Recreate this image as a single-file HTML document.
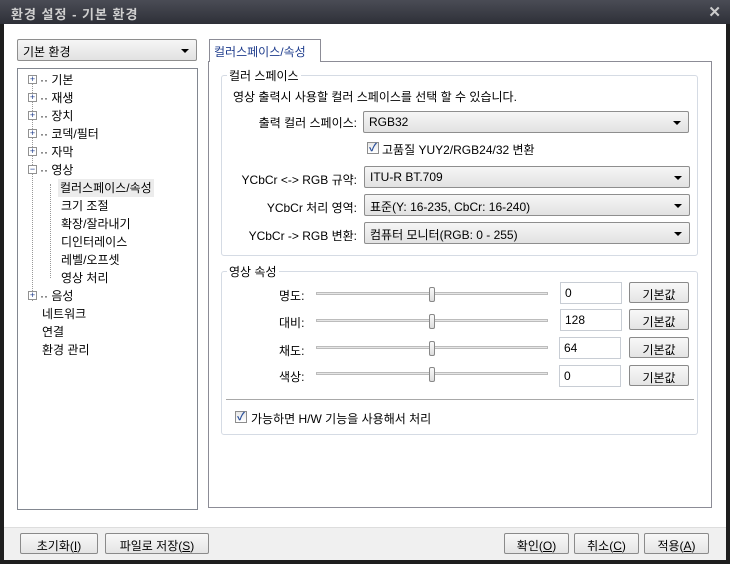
<!DOCTYPE html>
<html><head><meta charset="utf-8"><style>
*{margin:0;padding:0;box-sizing:border-box}
body{width:730px;height:564px;overflow:hidden;background:#1e1e1e;font-family:"Liberation Sans","Noto Sans CJK KR","NanumGothic",sans-serif;font-size:12px;color:#000;position:relative}
.a{position:absolute}
.title{left:0;top:0;width:730px;height:24px;background:linear-gradient(#4a4c55,#2e3038);color:#cfcfcf;font-size:13px;font-weight:bold;padding:4px 0 0 11px;letter-spacing:1px}
.close{right:9px;top:3px;color:#ccc;font-size:15px;font-weight:bold}
.client{left:4px;top:24px;width:722px;height:536px;background:#fff}
.bottom{left:4px;top:527px;width:722px;height:33px;background:#f0f0f0;border-top:1px solid #ddd}
.combo{height:22px;border:1px solid #8e8e8e;border-radius:2px;background:linear-gradient(#f6f6f6,#e2e2e2);padding:3px 5px;font-size:12px}
.combo:after{content:"";position:absolute;right:7px;top:9px;border-left:4px solid transparent;border-right:4px solid transparent;border-top:4px solid #000}
.tree{left:17px;top:68px;width:181px;height:442px;border:1px solid #828790}
.ti{position:absolute;font-size:12px;height:18px}
.pb{position:absolute;width:9px;height:9px;border:1px solid #919191;background:#fff;font-size:9px;line-height:7px;text-align:center;color:#1e3c8c}
.panel{left:208px;top:61px;width:504px;height:447px;border:1px solid #8c8c96}
.tab{left:209px;top:39px;width:112px;height:23px;border:1px solid #8c8c96;border-bottom:none;background:#fff;padding:3px 4px;color:#1e3c8c}
.grp{border:1px solid #d5dbe4;border-radius:3px}
.gl{background:#fff;padding:0 2px}
.lbl{text-align:right;width:150px}
.btn{height:21px;border:1px solid #8a8a8a;border-radius:2px;background:linear-gradient(#f8f8f8,#e4e4e4);text-align:center;font-size:12px;padding-top:3px}
.ed{width:62px;height:22px;border:1px solid #c8cdd4;background:#fff;padding:3px 4px}
.trk{height:3px;border:1px solid #bcbcbc;background:#e6e6e6;width:232px}
.thumb{width:6px;height:15px;border:1px solid #888;border-radius:2px;background:linear-gradient(#fafafa,#ddd)}
.cb{width:12px;height:12px;border:1px solid #8d8d8d;background:linear-gradient(#e8e8e8,#fff);color:#2a4f9a;font-size:11px;line-height:10px;text-align:center;font-weight:bold}
u{text-decoration:underline}
</style></head><body>
<div class="a title">환경 설정 - 기본 환경</div>
<div class="a close">✕</div>
<div class="a client"></div>
<div class="a bottom"></div>

<div class="a combo" style="left:17px;top:39px;width:180px">기본 환경</div>

<div class="a tree">
<div class="a" style="left:14px;top:12px;height:220px;border-left:1px dotted #999"></div>
<div class="a" style="left:32px;top:115px;height:94px;border-left:1px dotted #999"></div>
<div class="pb" style="left:10px;top:6px">+</div><div class="ti" style="left:22px;top:2px">·· 기본</div>
<div class="pb" style="left:10px;top:24px">+</div><div class="ti" style="left:22px;top:20px">·· 재생</div>
<div class="pb" style="left:10px;top:42px">+</div><div class="ti" style="left:22px;top:38px">·· 장치</div>
<div class="pb" style="left:10px;top:60px">+</div><div class="ti" style="left:22px;top:56px">·· 코덱/필터</div>
<div class="pb" style="left:10px;top:78px">+</div><div class="ti" style="left:22px;top:74px">·· 자막</div>
<div class="pb" style="left:10px;top:96px">−</div><div class="ti" style="left:22px;top:92px">·· 영상</div>
<div class="ti" style="left:40px;top:110px;background:#ececec;padding:0 2px">컬러스페이스/속성</div>
<div class="ti" style="left:43px;top:128px">크기 조절</div>
<div class="ti" style="left:43px;top:146px">확장/잘라내기</div>
<div class="ti" style="left:43px;top:164px">디인터레이스</div>
<div class="ti" style="left:43px;top:182px">레벨/오프셋</div>
<div class="ti" style="left:43px;top:200px">영상 처리</div>
<div class="pb" style="left:10px;top:222px">+</div><div class="ti" style="left:22px;top:218px">·· 음성</div>
<div class="ti" style="left:24px;top:236px">네트워크</div>
<div class="ti" style="left:24px;top:254px">연결</div>
<div class="ti" style="left:24px;top:272px">환경 관리</div>
</div>

<div class="a panel"></div>
<div class="a tab">컬러스페이스/속성</div>

<div class="a grp" style="left:221px;top:75px;width:477px;height:181px"></div>
<div class="a gl" style="left:227px;top:67px">컬러 스페이스</div>
<div class="a" style="left:233px;top:88px">영상 출력시 사용할 컬러 스페이스를 선택 할 수 있습니다.</div>
<div class="a lbl" style="left:207px;top:114px">출력 컬러 스페이스:</div>
<div class="a combo" style="left:363px;top:111px;width:326px">RGB32</div>
<div class="a cb" style="left:367px;top:142px">✓</div>
<div class="a" style="left:382px;top:141px">고품질 YUY2/RGB24/32 변환</div>
<div class="a lbl" style="left:207px;top:171px">YCbCr &lt;-&gt; RGB 규약:</div>
<div class="a combo" style="left:364px;top:166px;width:326px">ITU-R BT.709</div>
<div class="a lbl" style="left:207px;top:199px">YCbCr 처리 영역:</div>
<div class="a combo" style="left:364px;top:194px;width:326px">표준(Y: 16-235, CbCr: 16-240)</div>
<div class="a lbl" style="left:207px;top:227px">YCbCr -&gt; RGB 변환:</div>
<div class="a combo" style="left:364px;top:222px;width:326px">컴퓨터 모니터(RGB: 0 - 255)</div>

<div class="a grp" style="left:221px;top:271px;width:477px;height:164px"></div>
<div class="a gl" style="left:227px;top:263px">영상 속성</div>

<div class="a" style="left:279px;top:287px">명도:</div>
<div class="a trk" style="left:316px;top:292px"></div><div class="a thumb" style="left:429px;top:287px"></div>
<div class="a ed" style="left:560px;top:282px">0</div>
<div class="a btn" style="left:629px;top:282px;width:60px">기본값</div>

<div class="a" style="left:279px;top:314px">대비:</div>
<div class="a trk" style="left:316px;top:319px"></div><div class="a thumb" style="left:429px;top:314px"></div>
<div class="a ed" style="left:560px;top:309px">128</div>
<div class="a btn" style="left:629px;top:309px;width:60px">기본값</div>

<div class="a" style="left:279px;top:342px">채도:</div>
<div class="a trk" style="left:316px;top:346px"></div><div class="a thumb" style="left:429px;top:341px"></div>
<div class="a ed" style="left:559px;top:337px">64</div>
<div class="a btn" style="left:629px;top:337px;width:60px">기본값</div>

<div class="a" style="left:279px;top:368px">색상:</div>
<div class="a trk" style="left:316px;top:372px"></div><div class="a thumb" style="left:429px;top:367px"></div>
<div class="a ed" style="left:559px;top:365px">0</div>
<div class="a btn" style="left:629px;top:365px;width:60px">기본값</div>

<div class="a" style="left:226px;top:399px;width:468px;border-top:1px solid #a8a8a8"></div>
<div class="a cb" style="left:235px;top:411px">✓</div>
<div class="a" style="left:251px;top:410px">가능하면 H/W 기능을 사용해서 처리</div>

<div class="a btn" style="left:20px;top:533px;width:78px">초기화(<u>I</u>)</div>
<div class="a btn" style="left:105px;top:533px;width:104px">파일로 저장(<u>S</u>)</div>
<div class="a btn" style="left:504px;top:533px;width:65px">확인(<u>O</u>)</div>
<div class="a btn" style="left:574px;top:533px;width:65px">취소(<u>C</u>)</div>
<div class="a btn" style="left:644px;top:533px;width:65px">적용(<u>A</u>)</div>
</body></html>
